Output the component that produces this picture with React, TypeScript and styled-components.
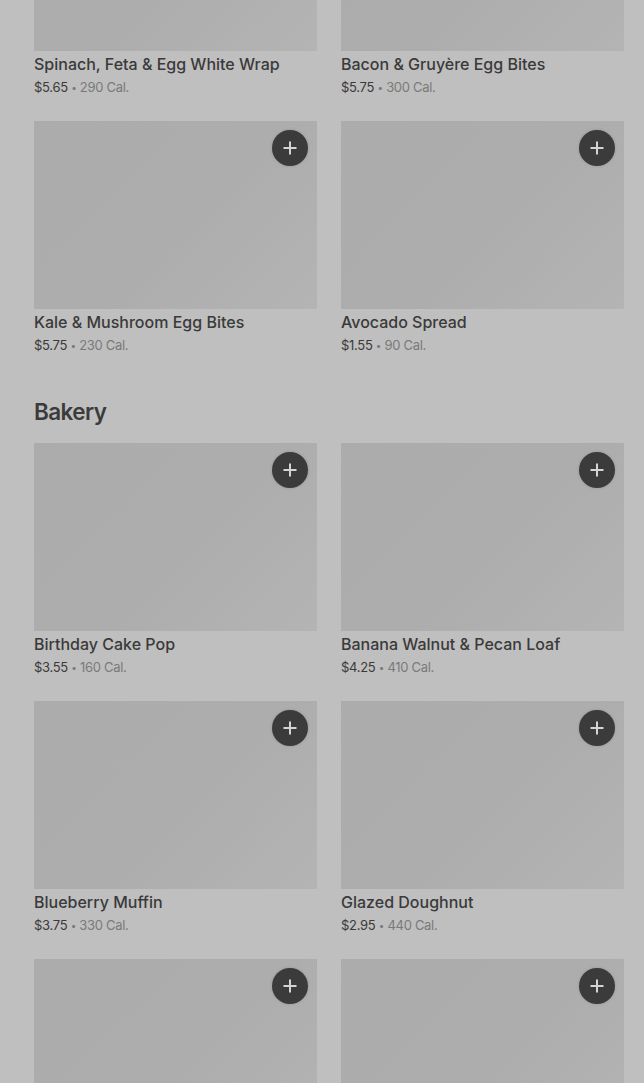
import React from "react";
import styled, { createGlobalStyle } from "styled-components";

const Global = createGlobalStyle`
  html, body { margin: 0; padding: 0; background: #bfbfbf; overflow: hidden; }
  body { font-family: "Inter", "Roboto", "Liberation Sans", sans-serif; }
`;

const Page = styled.div`
  padding: 0 20px 0 34px;
  margin-top: -137px;
`;

const Section = styled.section`
  & + & { margin-top: 41px; }
`;

const Heading = styled.h2`
  margin: 0 0 15px;
  font-size: 22.5px;
  line-height: 32px;
  font-weight: 600;
  color: #3b3b3b;
  letter-spacing: -0.6px;
`;

const Grid = styled.div`
  display: grid;
  grid-template-columns: 1fr 1fr;
  column-gap: 24px;
  row-gap: 24px;
`;

const Card = styled.div`
  display: flex;
  flex-direction: column;
`;

const Thumb = styled.div`
  position: relative;
  height: 188px;
  background: linear-gradient(135deg, #acacac 0%, #adadad 55%, #b4b4b4 100%);
`;

const AddButton = styled.button`
  position: absolute;
  top: 9px;
  right: 9px;
  width: 36px;
  height: 36px;
  border-radius: 50%;
  border: none;
  padding: 0;
  background: #3b3b3b;
  display: flex;
  align-items: center;
  justify-content: center;
  box-shadow: 0 0 3px rgba(0,0,0,0.15);
`;

const Title = styled.div`
  margin-top: 2px;
  font-size: 16px;
  line-height: 22px;
  font-weight: 500;
  color: #3a3a3a;
  letter-spacing: 0;
`;

const Meta = styled.div`
  margin-top: 2px;
  font-size: 13px;
  line-height: 20px;
  color: #7a7a7a;
  letter-spacing: -0.3px;
`;

const Price = styled.span`
  color: #3a3a3a;
`;

const Dot = styled.span`
  font-size: 10px;
  vertical-align: 1px;
`;

type Item = { name: string; price: string; cal: number };

const breakfast: Item[] = [
  { name: "Spinach, Feta & Egg White Wrap", price: "$5.65", cal: 290 },
  { name: "Bacon & Gruyère Egg Bites", price: "$5.75", cal: 300 },
  { name: "Kale & Mushroom Egg Bites", price: "$5.75", cal: 230 },
  { name: "Avocado Spread", price: "$1.55", cal: 90 },
];

const bakery: Item[] = [
  { name: "Birthday Cake Pop", price: "$3.55", cal: 160 },
  { name: "Banana Walnut & Pecan Loaf", price: "$4.25", cal: 410 },
  { name: "Blueberry Muffin", price: "$3.75", cal: 330 },
  { name: "Glazed Doughnut", price: "$2.95", cal: 440 },
  { name: "Chocolate Croissant", price: "$3.95", cal: 300 },
  { name: "Butter Croissant", price: "$3.45", cal: 260 },
];

const Plus = () => (
  <svg width="14" height="14" viewBox="0 0 14 14" fill="none">
    <path d="M7 1.5v11M1.5 7h11" stroke="#d4d4d4" strokeWidth="2" strokeLinecap="square" />
  </svg>
);

const ProductCard = ({ item, first }: { item: Item; first?: boolean }) => (
  <Card>
    <Thumb>{!first && <AddButton aria-label="Add"><Plus /></AddButton>}</Thumb>
    <Title>{item.name}</Title>
    <Meta>
      <Price>{item.price}</Price> <Dot>•</Dot> {item.cal} Cal.
    </Meta>
  </Card>
);

export default function App() {
  return (
    <>
      <Global />
      <Page>
        <Section>
          <Grid>
            {breakfast.map((it, i) => (
              <ProductCard key={it.name} item={it} first={i < 2} />
            ))}
          </Grid>
        </Section>
        <Section>
          <Heading>Bakery</Heading>
          <Grid>
            {bakery.map((it) => (
              <ProductCard key={it.name} item={it} />
            ))}
          </Grid>
        </Section>
      </Page>
    </>
  );
}
